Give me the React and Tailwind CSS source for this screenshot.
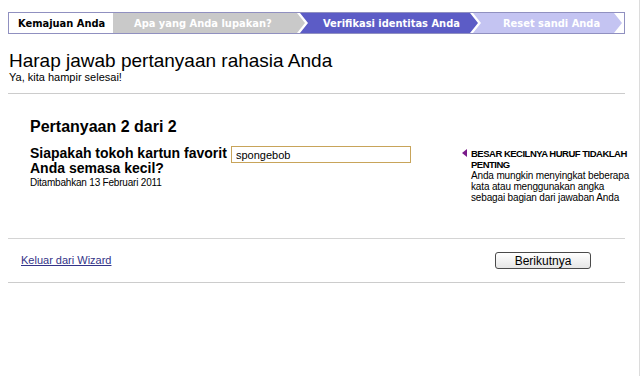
export default function App() {
  return (
    <div className="w-[640px] h-[376px] bg-white border-r border-[#dcdcdc] font-['Liberation_Sans',Arial,sans-serif] text-black overflow-hidden">
      <div className="pl-2 pr-[14px] pt-3">
        {/* Progress bar */}
        <div className="h-[22px] border border-[#9090c0] flex items-stretch bg-white font-['DejaVu_Sans_Condensed','DejaVu_Sans',sans-serif] font-bold text-[11px] leading-none">
          <div className="w-[104px] shrink-0 flex items-center pl-[9px] text-black">Kemajuan Anda</div>
          <div className="w-[192px] shrink-0 flex items-center pl-[21px] bg-[#c9c9c9] text-white [clip-path:polygon(0_0,184px_0,192px_50%,184px_100%,0_100%)]">
            Apa yang Anda lupakan?
          </div>
          <div className="w-[178px] shrink-0 -ml-[5px] flex items-center pl-[23px] bg-[#5c5cc6] text-white [clip-path:polygon(0_0,170px_0,178px_50%,170px_100%,0_100%,8px_50%)]">
            Verifikasi identitas Anda
          </div>
          <div className="w-[149px] shrink-0 -ml-[5px] flex items-center pl-[30px] bg-[#c4c4f2] text-white [clip-path:polygon(0_0,141px_0,149px_50%,141px_100%,0_100%,8px_50%)]">
            Reset sandi Anda
          </div>
        </div>

        {/* Heading */}
        <div className="mt-4 pl-px">
          <h1 className="text-[19px] leading-[21px] font-normal">Harap jawab pertanyaan rahasia Anda</h1>
          <p className="text-[11px] leading-[13px]">Ya, kita hampir selesai!</p>
        </div>
        <div className="mt-[9px] h-px bg-[#cccccc]" />

        {/* Question */}
        <div className="pl-[22px]">
          <h2 className="mt-[23px] text-[16px] leading-[19px] font-bold">Pertanyaan 2 dari 2</h2>
          <div className="mt-[10px] flex items-start">
            <div className="w-[201px] shrink-0">
              <div className="text-[14px] leading-[15px] font-bold whitespace-nowrap">
                Siapakah tokoh kartun favorit
                <br />
                Anda semasa kecil?
              </div>
              <div className="mt-px text-[10px] leading-[12px] tracking-[-0.2px] whitespace-nowrap">Ditambahkan 13 Februari 2011</div>
            </div>
            <input
              readOnly
              value="spongebob"
              className="w-[180px] h-[17px] shrink-0 border border-[#c8a45a] px-[4px] text-[11px] leading-none outline-none font-['Liberation_Sans',Arial,sans-serif]"
            />
            <div className="ml-[51px] shrink-0 flex items-start pt-[2px]">
              <svg width="5" height="8" viewBox="0 0 5 8" className="mt-[1px] shrink-0">
                <polygon points="5,0 0,4 5,8" fill="#7a1a8a" />
              </svg>
              <div className="ml-[4px] text-[10px] leading-[11px]">
                <div className="font-bold whitespace-nowrap text-[9.5px] tracking-[-0.5px]">
                  BESAR KECILNYA HURUF TIDAKLAH
                  <br />
                  PENTING
                </div>
                <div className="whitespace-nowrap tracking-[-0.15px]">
                  Anda mungkin menyingkat beberapa
                  <br />
                  kata atau menggunakan angka
                  <br />
                  sebagai bagian dari jawaban Anda
                </div>
              </div>
            </div>
          </div>
        </div>

        <div className="mt-[35px] h-px bg-[#d4d4d4]" />

        {/* Footer */}
        <div className="flex items-center justify-between py-[13px] pl-[13px] pr-[34px]">
          <a href="#" className="text-[11px] leading-[13px] text-[#333388] underline">Keluar dari Wizard</a>
          <button className="w-[96px] h-[17px] rounded-[3px] border border-[#4a4a4a] bg-gradient-to-b from-white to-[#e6e6e6] text-[12px] leading-none text-black font-['Liberation_Sans',Arial,sans-serif]">
            Berikutnya
          </button>
        </div>
        <div className="h-px bg-[#cccccc]" />
      </div>
    </div>
  );
}
